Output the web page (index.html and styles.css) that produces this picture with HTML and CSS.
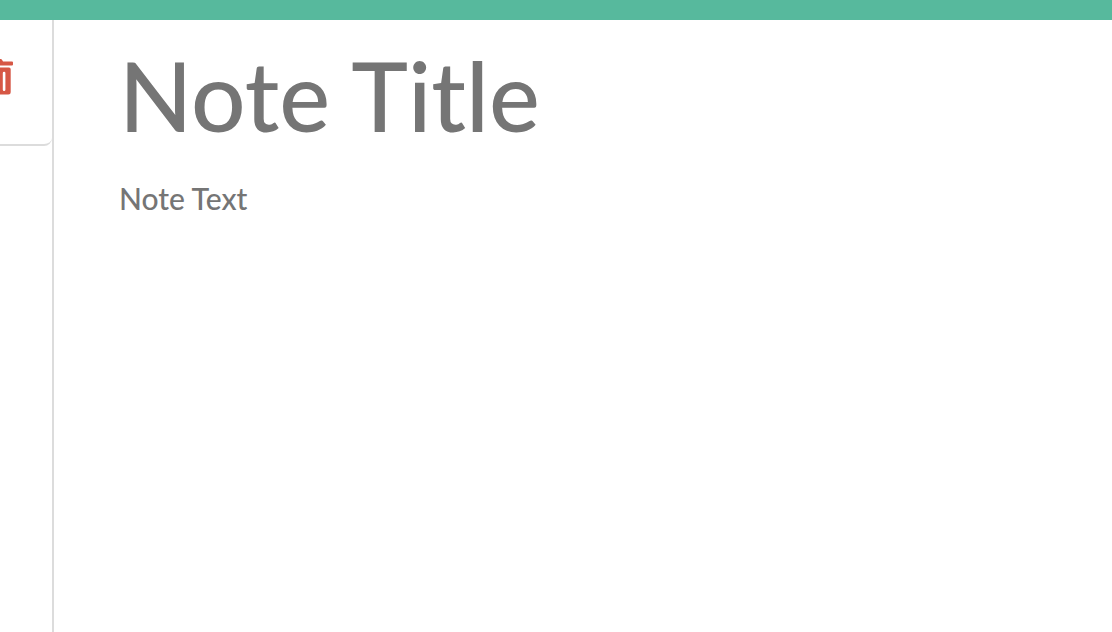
FILE: index.html
```html
<!DOCTYPE html>
<html lang="en">
<head>
<meta charset="utf-8">
<title>Notes</title>
<link rel="stylesheet" href="styles.css">
</head>
<body>
<header class="topbar"></header>
<main class="layout">
  <aside class="sidebar">
    <div class="note-item">
      <button class="delete" type="button" aria-label="Delete note">
        <svg class="trash" viewBox="0 0 32 36" aria-hidden="true"><path fill-rule="evenodd" d="M10 2.500L11 .8Q11.400 0 12.300 0H19.700Q20.600 0 21 .8L22 2.500H31Q32 2.500 32 3.500V5.500Q32 6.500 31 6.500H1Q0 6.500 0 5.500V3.500Q0 2.500 1 2.500ZM4 8.500H28Q29.700 8.500 29.700 10.200V33.200Q29.700 35.500 27.400 35.500H4.600Q2.300 35.500 2.300 33.200V10.200Q2.300 8.500 4 8.500ZM7.600 14V30.700Q7.600 32 8.900 32T10.200 30.700V14Q10.200 12.700 8.900 12.700T7.600 14ZM14.700 14V30.700Q14.700 32 16 32T17.300 30.700V14Q17.300 12.700 16 12.700T14.700 14ZM21.800 14V30.700Q21.800 32 23.100 32T24.400 30.700V14Q24.400 12.700 23.100 12.700T21.800 14Z"/></svg>
      </button>
    </div>
  </aside>
  <form class="editor">
    <input class="note-title" type="text" placeholder="Note Title" aria-label="Note Title">
    <textarea class="note-text" placeholder="Note Text" aria-label="Note Text"></textarea>
  </form>
</main>
</body>
</html>
```
FILE: styles.css
```css
* { box-sizing: border-box; }
body {
  margin: 0;
  min-height: 100vh;
  display: flex;
  flex-direction: column;
  font-family: Lato, sans-serif;
  background: #fff;
}
.topbar { height: 20px; background: #57b99d; }
.layout { flex: 1; display: flex; }
.sidebar { width: 54px; border-right: 2px solid #dcdcdc; }
.note-item {
  height: 126px;
  padding-top: 39px;
  overflow: hidden;
  border-bottom: 2px solid #dcdcdc;
  border-bottom-right-radius: 8px;
}
.delete {
  display: flex;
  justify-content: flex-end;
  width: 13px;
  padding: 0;
  border: 0;
  background: none;
  color: #d65745;
}
.trash { flex: none; width: 32px; height: 36px; fill: currentColor; }
.editor { flex: 1; display: flex; flex-direction: column; min-width: 0; padding: 12px 64px; }
.note-title, .note-text {
  width: 100%;
  padding: 0 1px;
  border: 0;
  outline: 0;
  background: none;
  font-family: inherit;
  font-weight: 500;
}
.note-title { height: 124px; font-size: 96px; }
.note-text { flex: 1; margin-top: 24px; font-size: 30px; line-height: 36px; resize: none; }
.note-title::placeholder, .note-text::placeholder { color: #757575; }
```
